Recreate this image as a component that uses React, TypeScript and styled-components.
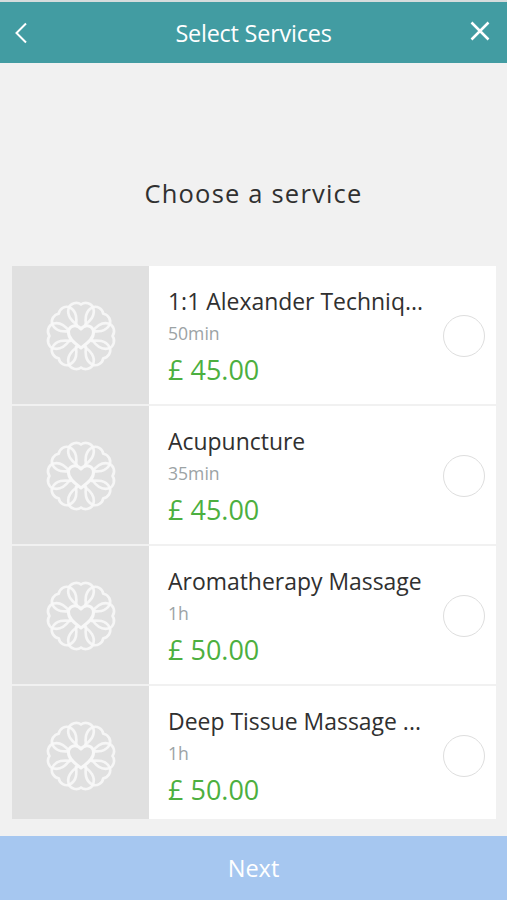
import React, { useState } from "react";
import styled, { createGlobalStyle } from "styled-components";

const GlobalStyle = createGlobalStyle`
  * { box-sizing: border-box; }
  body { margin: 0; background: #f1f1f1; }
  button { border: 0; padding: 0; background: none; font: inherit; color: inherit; }
`;

const Screen = styled.div`
  display: flex;
  flex-direction: column;
  height: 900px;
  overflow: hidden;
  background: #f1f1f1;
  color: #303030;
  font-family: "Open Sans", "Noto Sans", sans-serif;
`;

const Header = styled.header`
  display: grid;
  grid-template-columns: 54px 1fr 54px;
  flex: none;
  height: 63px;
  border-top: 2px solid #d5dcdc;
  background: #429ca2;
  color: #fff;
`;

const HeaderButton = styled.button`
  display: flex;
  align-items: flex-start;
  justify-content: center;
`;

const BackIcon = styled.svg`
  width: 14px;
  height: 24px;
  margin: 19px 12px 0 0;
`;

const CloseIcon = styled.svg`
  width: 22px;
  height: 22px;
  margin: 18px 0 0 0;
`;

const Title = styled.h1`
  margin: 0;
  text-align: center;
  font-size: 23.4px;
  font-weight: 400;
  line-height: 62px;
  letter-spacing: -0.2px;
`;

const Heading = styled.h2`
  flex: none;
  height: 203px;
  margin: 0;
  padding-top: 110px;
  text-align: center;
  font-size: 25.5px;
  font-weight: 400;
  line-height: 40px;
  letter-spacing: 1.2px;
`;

const List = styled.ul`
  display: flex;
  flex-direction: column;
  gap: 2px;
  flex: none;
  height: 553px;
  margin: 0 11px 0 12px;
  padding: 0;
  overflow: hidden;
  list-style: none;
`;

const Row = styled.li`
  display: grid;
  grid-template-columns: 137px 275px 1fr;
  flex: none;
  height: 138px;
  background: #fff;
`;

const Thumb = styled.div`
  display: flex;
  align-items: center;
  justify-content: center;
  padding-top: 2px;
  background: #e0e0e0;
`;

const Details = styled.div`
  padding: 18px 0 0 19px;
  white-space: nowrap;
`;

const Name = styled.div`
  height: 34px;
  font-size: 22.95px;
  line-height: 34px;
`;

const Duration = styled.div`
  height: 30px;
  color: #9ca3a5;
  font-size: 17.6px;
  line-height: 30px;
`;

const Price = styled.div`
  height: 44px;
  color: #4caf40;
  font-size: 27px;
  line-height: 44px;
`;

const Choice = styled.button<{ $selected: boolean }>`
  align-self: center;
  justify-self: end;
  width: 42px;
  height: 42px;
  margin: 1px 11px 0 0;
  border: 1.5px solid #dedede;
  border-radius: 50%;
  background: ${(p) => (p.$selected ? "#4caf40" : "#fff")};
`;

const Next = styled.button`
  flex: none;
  height: 64px;
  margin-top: auto;
  background: #a6c7f0;
  color: #fff;
  font-size: 23.5px;
  line-height: 64px;
`;

const petals = [0, 45, 90, 135, 180, 225, 270, 315];

function FlowerHeart() {
  return (
    <svg width="72" height="72" viewBox="-36 -36 72 72" fill="none" stroke="#f8f8f8" strokeLinecap="round" strokeLinejoin="round">
      {petals.map((angle) => (
        <path
          key={angle}
          transform={`rotate(${angle})`}
          strokeWidth="2.7"
          strokeOpacity="0.88"
          d="M-4 -11C-9 -15 -14.5 -20 -12.3 -28C-10.5 -33 -4 -34.5 0 -31.5C4 -34.5 10.5 -33 12.3 -28C14.5 -20 9 -15 4 -11"
        />
      ))}
      <path strokeWidth="3" fill="#e0e0e0" d="M0 12C-7 7 -13 2 -12.5 -4C-12 -11 -4 -12 0 -7C4 -12 12 -11 12.5 -4C13 2 7 7 0 12Z" />
    </svg>
  );
}

const services = [
  { name: "1:1 Alexander Techniq...", duration: "50min", price: "£ 45.00" },
  { name: "Acupuncture", duration: "35min", price: "£ 45.00" },
  { name: "Aromatherapy Massage", duration: "1h", price: "£ 50.00" },
  { name: "Deep Tissue Massage ...", duration: "1h", price: "£ 50.00" },
];

export default function App() {
  const [selected, setSelected] = useState<string | null>(null);
  return (
    <>
      <GlobalStyle />
      <Screen>
        <Header>
          <HeaderButton aria-label="Back">
            <BackIcon viewBox="0 0 14 24" fill="none" stroke="#fff" strokeWidth="2">
              <path d="M12 2.5L2.5 12L12 21.5" />
            </BackIcon>
          </HeaderButton>
          <Title>Select Services</Title>
          <HeaderButton aria-label="Close">
            <CloseIcon viewBox="0 0 22 22" fill="none" stroke="#fff" strokeWidth="2.5">
              <path d="M2.5 2.5L19.5 19.5M19.5 2.5L2.5 19.5" />
            </CloseIcon>
          </HeaderButton>
        </Header>
        <Heading>Choose a service</Heading>
        <List>
          {services.map((s) => (
            <Row key={s.name}>
              <Thumb><FlowerHeart /></Thumb>
              <Details>
                <Name>{s.name}</Name>
                <Duration>{s.duration}</Duration>
                <Price>{s.price}</Price>
              </Details>
              <Choice
                aria-label={s.name}
                $selected={selected === s.name}
                onClick={() => setSelected(s.name)}
              />
            </Row>
          ))}
        </List>
        <Next>Next</Next>
      </Screen>
    </>
  );
}
